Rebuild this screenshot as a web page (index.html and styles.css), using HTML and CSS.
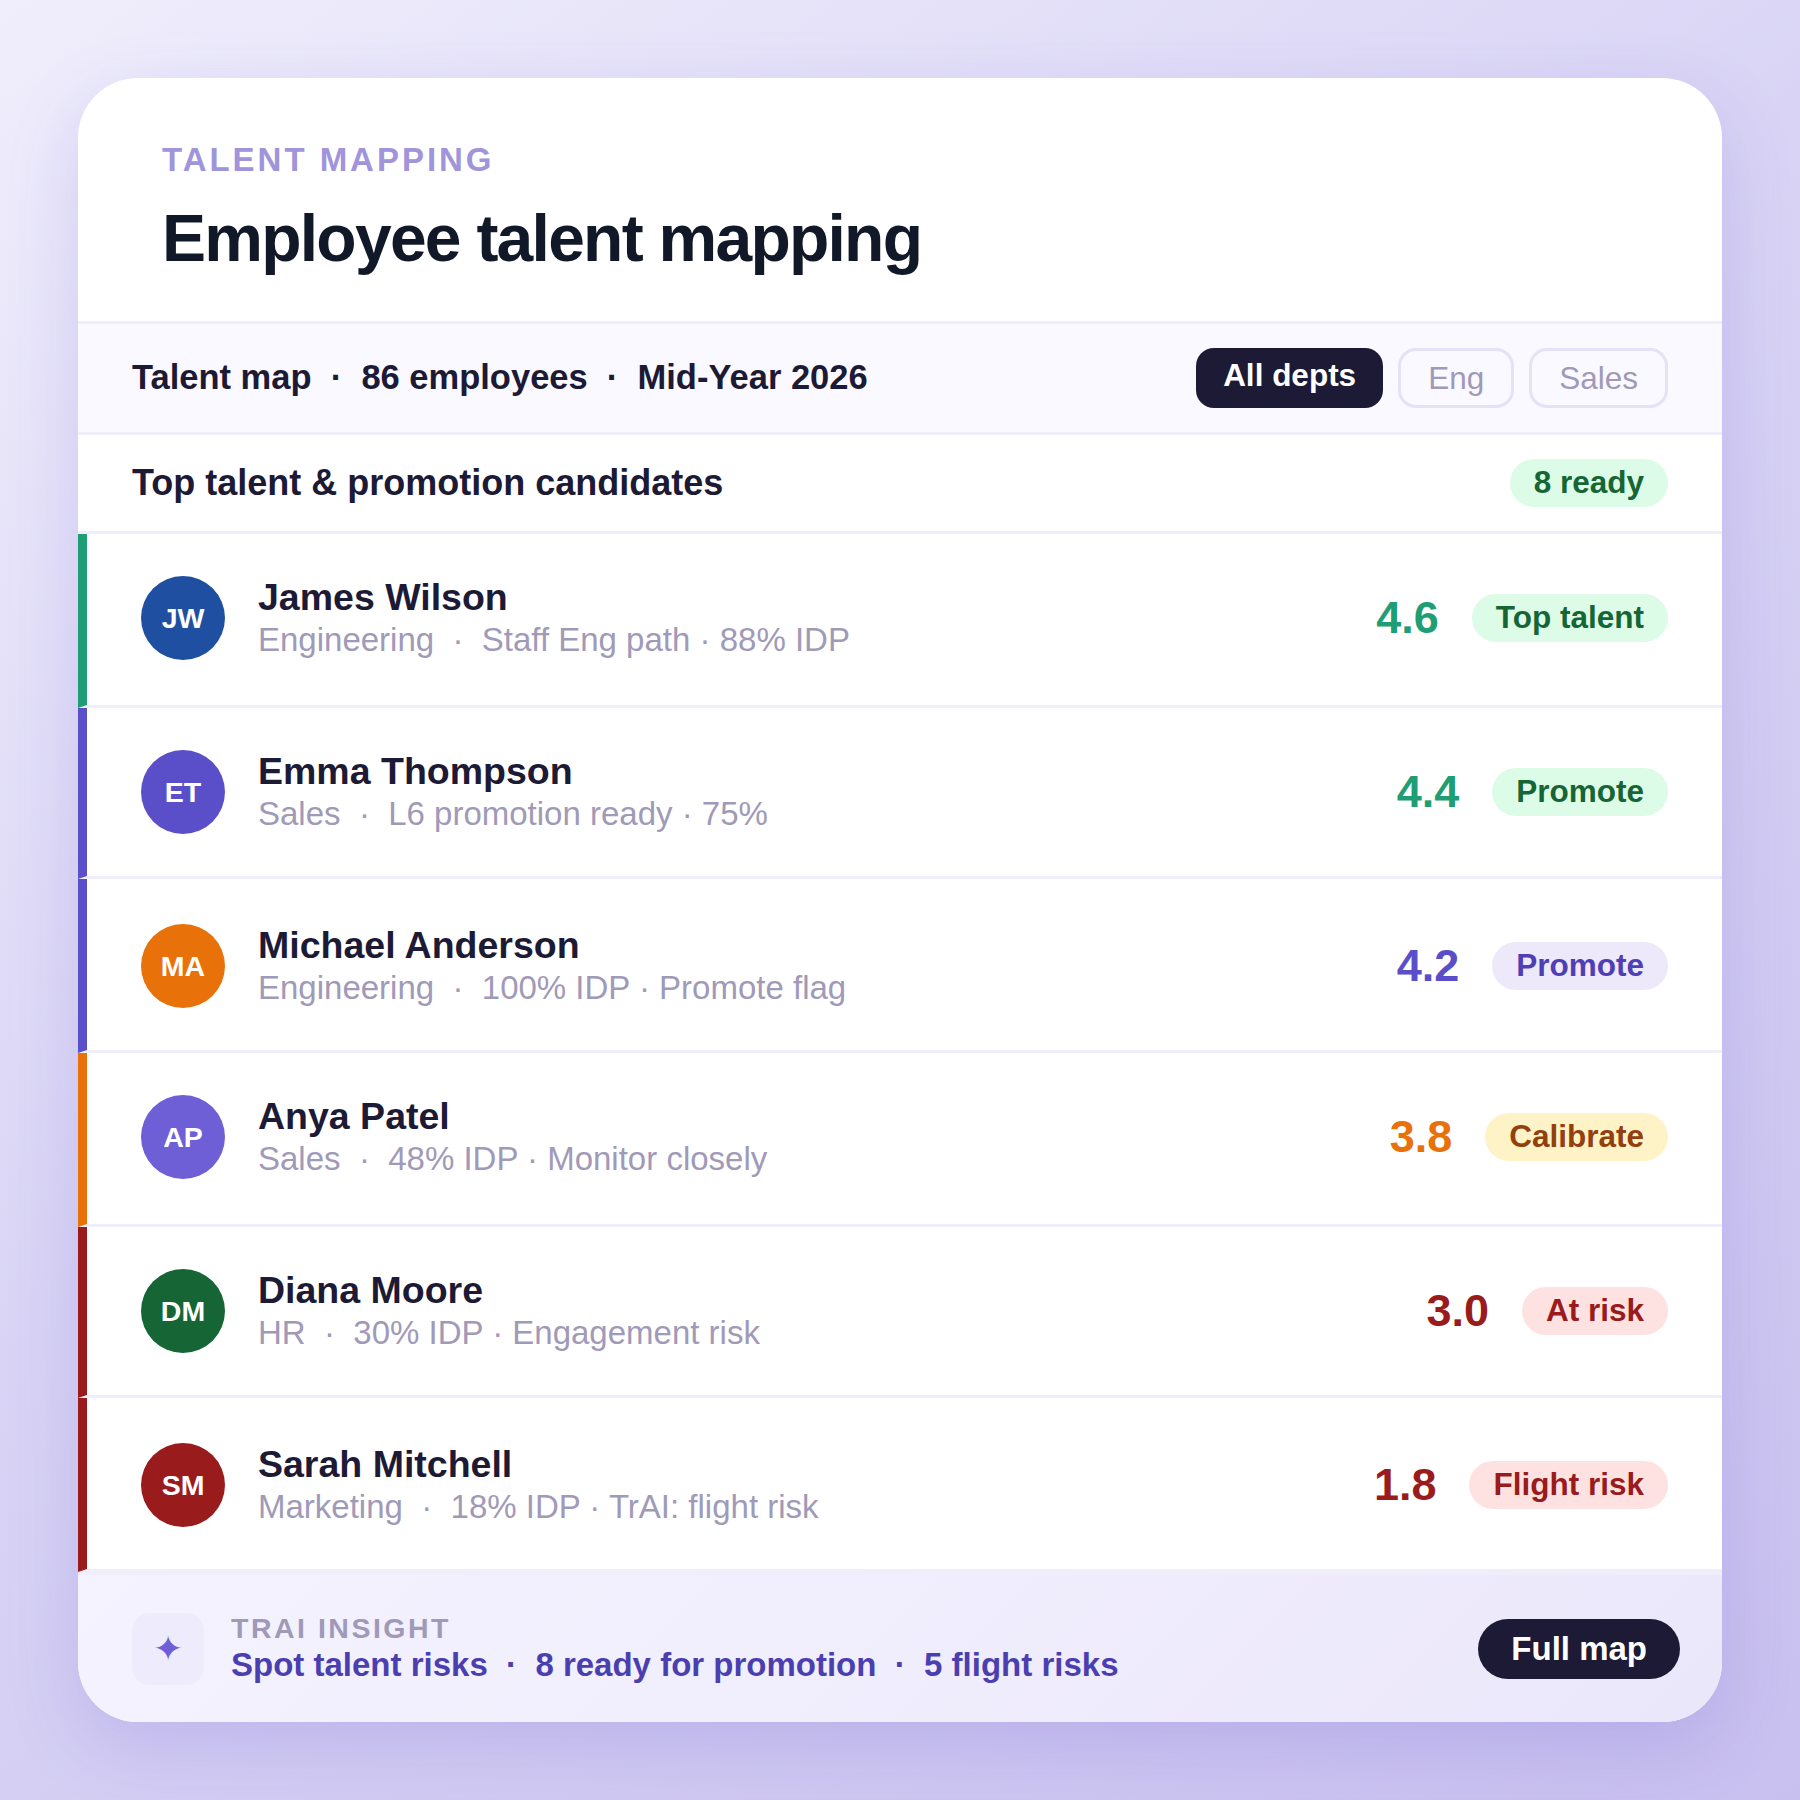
FILE: index.html
```html
<!DOCTYPE html>
<html lang="en">
<head>
<meta charset="utf-8">
<title>Employee talent mapping</title>
<link rel="stylesheet" href="styles.css">
</head>
<body>
<main class="card">
  <header class="head">
    <div class="eyebrow">TALENT MAPPING</div>
    <h1 class="title">Employee talent mapping</h1>
  </header>
  <div class="toolbar">
    <div class="summary">Talent map &nbsp;·&nbsp; 86 employees &nbsp;·&nbsp; Mid-Year 2026</div>
    <div class="filters">
      <span class="filter active">All depts</span>
      <span class="filter">Eng</span>
      <span class="filter">Sales</span>
    </div>
  </div>
  <div class="section">
    <div class="section-title">Top talent &amp; promotion candidates</div>
    <span class="pill green">8 ready</span>
  </div>
  <div class="row bar-teal">
    <div class="avatar av-blue">JW</div>
    <div class="info"><div class="name">James Wilson</div><div class="meta">Engineering &nbsp;·&nbsp; Staff Eng path · 88% IDP</div></div>
    <div class="score c-teal">4.6</div><span class="pill green">Top talent</span>
  </div>
  <div class="row short bar-indigo">
    <div class="avatar av-indigo">ET</div>
    <div class="info"><div class="name">Emma Thompson</div><div class="meta">Sales &nbsp;·&nbsp; L6 promotion ready · 75%</div></div>
    <div class="score c-teal">4.4</div><span class="pill green">Promote</span>
  </div>
  <div class="row low bar-indigo">
    <div class="avatar av-orange">MA</div>
    <div class="info"><div class="name">Michael Anderson</div><div class="meta">Engineering &nbsp;·&nbsp; 100% IDP · Promote flag</div></div>
    <div class="score c-indigo">4.2</div><span class="pill violet">Promote</span>
  </div>
  <div class="row bar-orange">
    <div class="avatar av-violet">AP</div>
    <div class="info"><div class="name">Anya Patel</div><div class="meta">Sales &nbsp;·&nbsp; 48% IDP · Monitor closely</div></div>
    <div class="score c-orange">3.8</div><span class="pill amber">Calibrate</span>
  </div>
  <div class="row short bar-red">
    <div class="avatar av-green">DM</div>
    <div class="info"><div class="name">Diana Moore</div><div class="meta">HR &nbsp;·&nbsp; 30% IDP · Engagement risk</div></div>
    <div class="score c-red">3.0</div><span class="pill red">At risk</span>
  </div>
  <div class="row low bar-red">
    <div class="avatar av-red">SM</div>
    <div class="info"><div class="name">Sarah Mitchell</div><div class="meta">Marketing &nbsp;·&nbsp; 18% IDP · TrAI: flight risk</div></div>
    <div class="score c-red">1.8</div><span class="pill red">Flight risk</span>
  </div>
  <footer class="foot">
    <div class="spark">✦</div>
    <div class="insight">
      <div class="insight-label">TRAI INSIGHT</div>
      <div class="insight-text">Spot talent risks &nbsp;·&nbsp; 8 ready for promotion &nbsp;·&nbsp; 5 flight risks</div>
    </div>
    <span class="cta">Full map</span>
  </footer>
</main>
</body>
</html>
```
FILE: styles.css
```css
* { box-sizing: border-box; }
html, body { margin: 0; }
body {
  width: 1800px;
  height: 1800px;
  padding: 78px;
  background: linear-gradient(145deg, #f0eefc 0%, #d9d4f5 45%, #c8c0ef 100%);
  font-family: "Liberation Sans", Arial, sans-serif;
}
.card {
  width: 1644px;
  height: 1644px;
  background: #fff;
  border-radius: 60px;
  overflow: hidden;
  display: flex;
  flex-direction: column;
  box-shadow: 0 24px 72px rgba(90, 70, 200, 0.18);
}
.head { height: 246px; padding: 63px 84px 0; border-bottom: 3px solid #f0eefa; }
.eyebrow { font-size: 33px; line-height: 38px; font-weight: 700; letter-spacing: 2.97px; color: #a094da; }
.title { margin: 21px 0 0; font-size: 66px; line-height: 76px; font-weight: 700; letter-spacing: -1.75px; color: #111827; }
.toolbar {
  height: 111px;
  padding: 0 54px;
  display: flex;
  align-items: center;
  justify-content: space-between;
  background: #faf9ff;
  border-bottom: 3px solid #f0eefa;
}
.summary { font-size: 34.5px; font-weight: 700; color: #1c1a35; padding-bottom: 2px; }
.filters { display: flex; gap: 15px; }
.filter {
  height: 60px;
  padding: 0 27px;
  display: flex;
  align-items: center;
  border: 3px solid #e5e1f6;
  border-radius: 18px;
  font-size: 31.5px;
  color: #a09ab8;
}
.filter.active { background: #1c1a35; border: 0; color: #fff; font-weight: 700; padding-bottom: 6px; }
.section {
  height: 99px;
  padding: 0 54px;
  display: flex;
  align-items: center;
  justify-content: space-between;
  border-bottom: 3px solid #f0eefa;
}
.section-title { font-size: 36px; font-weight: 700; color: #1c1a35; }
.pill {
  height: 48px;
  padding: 0 24px 2px;
  display: flex;
  align-items: center;
  border-radius: 24px;
  font-size: 31.5px;
  font-weight: 700;
  flex: none;
}
.green { background: #dcfce7; color: #166534; }
.violet { background: #ede9fb; color: #4f3fb5; }
.amber { background: #fef3c7; color: #92400e; }
.red { background: #fee2e2; color: #991b1b; }
.row {
  height: 174px;
  padding: 0 54px 3px;
  display: flex;
  align-items: center;
  border-left: 9px solid;
  border-bottom: 3px solid #f0eefa;
}
.row.short { height: 171px; padding-bottom: 0; }
.row.low { padding-top: 3px; padding-bottom: 0; }
.bar-teal { border-left-color: #1f9e75; }
.bar-indigo { border-left-color: #5b4fc9; }
.bar-orange { border-left-color: #e8710a; }
.bar-red { border-left-color: #991b1b; }
.avatar {
  width: 84px;
  height: 84px;
  border-radius: 50%;
  display: flex;
  align-items: center;
  justify-content: center;
  color: #fff;
  font-size: 28.5px;
  font-weight: 700;
  flex: none;
}
.av-blue { background: #1e4fa0; }
.av-indigo { background: #5b4fc9; }
.av-orange { background: #e8710a; }
.av-violet { background: #6e5fd6; }
.av-green { background: #166534; }
.av-red { background: #991b1b; }
.info { margin-left: 33px; flex: 1; min-width: 0; }
.name { font-size: 37.5px; line-height: 44px; font-weight: 700; color: #1c1a35; }
.meta { font-size: 33px; line-height: 42px; color: #a09ab8; }
.score { font-size: 45px; font-weight: 700; margin-right: 33px; }
.c-teal { color: #1f9e75; }
.c-indigo { color: #5b4fc9; }
.c-orange { color: #e8710a; }
.c-red { color: #991b1b; }
.foot {
  flex: 1;
  padding: 0 42px 0 54px;
  display: flex;
  align-items: center;
  background: linear-gradient(135deg, #f5f3ff, #ebe7fb);
  border-top: 3px solid #f0eefa;
}
.spark {
  width: 72px;
  height: 72px;
  border-radius: 18px;
  background: #eeebfd;
  display: flex;
  align-items: center;
  justify-content: center;
  flex: none;
  font-family: "DejaVu Sans", sans-serif;
  font-size: 36px;
  color: #6e5fd6;
}
.insight { margin-left: 27px; flex: 1; }
.insight-label { font-size: 28.5px; line-height: 33px; font-weight: 700; letter-spacing: 2.5px; color: #a09ab8; }
.insight-text { font-size: 33px; line-height: 40px; font-weight: 700; color: #4b3fb0; }
.cta {
  height: 60px;
  padding: 0 33px;
  display: flex;
  align-items: center;
  border-radius: 30px;
  background: #1c1a35;
  color: #fff;
  font-size: 33px;
  font-weight: 700;
  margin-top: 1px;
}
```
